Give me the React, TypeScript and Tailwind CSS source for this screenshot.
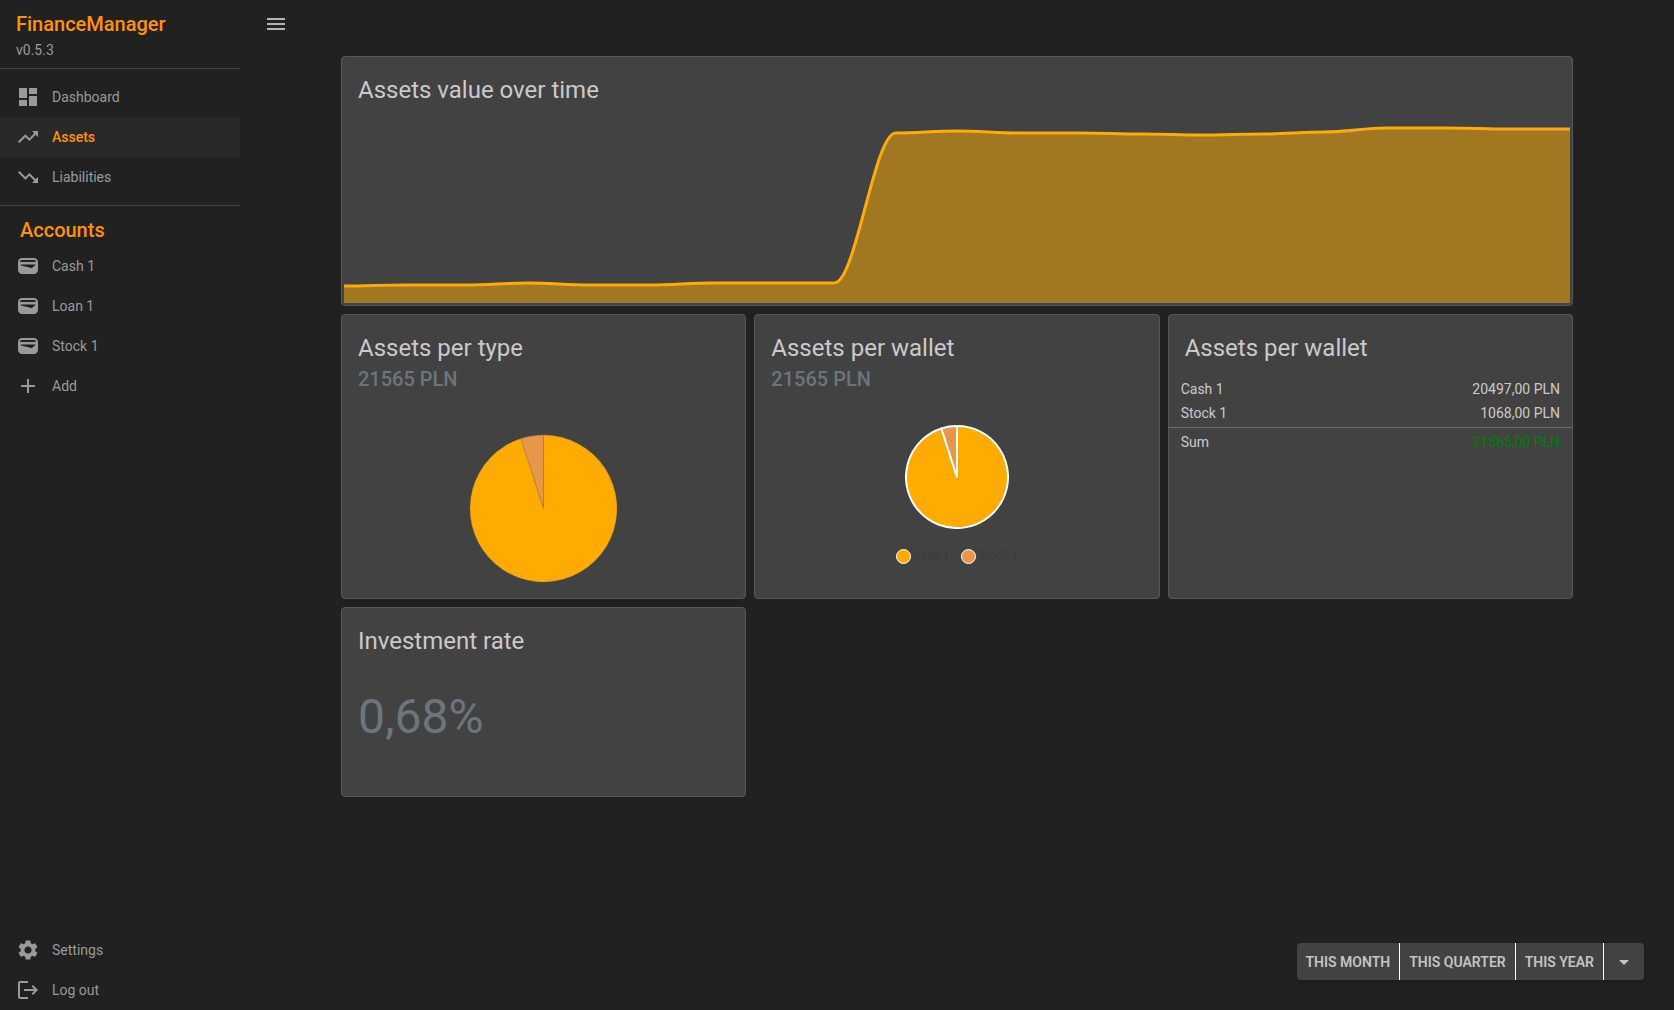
import React, { useState } from "react";
import {
  MdAdd,
  MdArrowDropDown,
  MdDashboard,
  MdLogout,
  MdMenu,
  MdSettings,
  MdTrendingDown,
  MdTrendingUp,
} from "react-icons/md";

function WalletIcon({ className }: { className?: string }) {
  return (
    <svg viewBox="0 0 24 24" fill="currentColor" fillRule="evenodd" className={className} aria-hidden="true">
      <path d="M18 4H6C3.79 4 2 5.79 2 8v8c0 2.21 1.79 4 4 4h12c2.21 0 4-1.79 4-4V8c0-2.21-1.79-4-4-4zM16.14 13.77c-.24.2-.57.28-.88.2L4.15 11.25C4.45 10.52 5.16 10.4 6 10.4h12c.67 0 1.26.1 1.63.44L16.14 13.77zM6 6h12c1.1 0 2 .9 2 2H4C4 6.9 4.9 6 6 6z" />
    </svg>
  );
}

type IconType = React.ComponentType<{ className?: string }>;

function NavItem({ icon: Icon, label, active = false }: { icon: IconType; label: string; active?: boolean }) {
  return (
    <a
      href="#"
      aria-current={active ? "page" : undefined}
      className={
        active
          ? "flex h-10 items-center gap-3 bg-[#292929] px-4 text-sm font-medium text-[#ff9300]"
          : "flex h-10 items-center gap-3 px-4 text-sm text-[#9a9a9a] hover:bg-[#292929]"
      }
    >
      <Icon className="size-6 shrink-0 text-[#9a9a9a]" />
      {label}
    </a>
  );
}

const values = [
  164, 163, 163, 161, 163, 163, 161, 161, 161, 11, 9, 11, 11, 12, 13, 12, 10, 6, 6, 7, 7,
];
const chartWidth = 1220;
const chartHeight = 181;

function smoothLine(points: number[]) {
  const step = chartWidth / (points.length - 1);
  const bend = step * 0.35;
  return points
    .map((y, i) => {
      const x = i * step;
      if (i === 0) return `M0 ${y}`;
      return `C${x - step + bend} ${points[i - 1]} ${x - bend} ${y} ${x} ${y}`;
    })
    .join(" ");
}

function AreaChart() {
  const line = smoothLine(values);
  return (
    <svg
      viewBox={`0 0 ${chartWidth} ${chartHeight}`}
      preserveAspectRatio="none"
      className="h-[181px] w-full"
      role="img"
      aria-label="Assets value over time"
    >
      <path d={`${line} V${chartHeight} H0 Z`} fill="#ffab00" fillOpacity="0.5" />
      <path d={line} fill="none" stroke="#feab0c" strokeWidth="3" vectorEffect="non-scaling-stroke" />
      <path d={`M0 ${chartHeight - 1}H${chartWidth}`} stroke="#8f7a45" strokeWidth="1" vectorEffect="non-scaling-stroke" />
    </svg>
  );
}

function PieChart({ radius, stroke, strokeWidth, className }: { radius: number; stroke: string; strokeWidth: number; className: string }) {
  const angle = (1068 / 21565) * Math.PI * 2;
  const half = radius + 1;
  const x = -Math.sin(angle) * radius;
  const y = -Math.cos(angle) * radius;
  return (
    <svg viewBox={`${-half} ${-half} ${half * 2} ${half * 2}`} className={className} role="img" aria-label="Share of assets">
      <g stroke={stroke} strokeWidth={strokeWidth} strokeLinejoin="round">
        <path d={`M0 0V${-radius}A${radius} ${radius} 0 1 1 ${x} ${y}Z`} fill="#ffab00" />
        <path d={`M0 0L${x} ${y}A${radius} ${radius} 0 0 1 0 ${-radius}Z`} fill="#e69749" />
      </g>
    </svg>
  );
}

function Card({ title, className, children }: { title: string; className: string; children: React.ReactNode }) {
  return (
    <section className={`flex flex-col rounded border border-[#585858] bg-[#424242] ${className}`}>
      <h2 className="px-4 pt-[17px] text-2xl text-[#cacaca]">{title}</h2>
      {children}
    </section>
  );
}

function Legend({ color, label }: { color: string; label: string }) {
  return (
    <li className="flex items-center gap-0.5">
      <span className="size-[15px] rounded-full border border-white" style={{ backgroundColor: color }} />
      {label}
    </li>
  );
}

export default function App() {
  const [open, setOpen] = useState(true);
  return (
    <div className="flex min-h-screen bg-[#212121] font-['Roboto',sans-serif]">
      {open && (
        <aside className="flex w-60 shrink-0 flex-col">
          <header className="border-b border-[#424242] px-4 pt-2 pb-2">
            <h1 className="text-xl leading-8 font-medium text-[#ff9300]">FinanceManager</h1>
            <p className="text-sm text-[#9a9a9a]">v0.5.3</p>
          </header>
          <nav aria-label="Main" className="border-b border-[#424242] py-2">
            <NavItem icon={MdDashboard} label="Dashboard" />
            <NavItem icon={MdTrendingUp} label="Assets" active />
            <NavItem icon={MdTrendingDown} label="Liabilities" />
          </nav>
          <nav aria-label="Accounts" className="pt-2">
            <h2 className="px-5 text-xl leading-8 font-medium text-[#ff9300]">Accounts</h2>
            <NavItem icon={WalletIcon} label="Cash 1" />
            <NavItem icon={WalletIcon} label="Loan 1" />
            <NavItem icon={WalletIcon} label="Stock 1" />
            <NavItem icon={MdAdd} label="Add" />
          </nav>
          <nav aria-label="Session" className="mt-auto">
            <NavItem icon={MdSettings} label="Settings" />
            <NavItem icon={MdLogout} label="Log out" />
          </nav>
        </aside>
      )}

      <div className="flex min-w-0 flex-1 flex-col">
        <header className="flex h-12 items-center px-6">
          <button type="button" aria-label="Toggle menu" onClick={() => setOpen(!open)}>
            <MdMenu className="size-6 text-[#b2b2b2]" />
          </button>
        </header>

        <main className="mx-auto grid w-full max-w-[1280px] grid-cols-3 gap-2 px-6 pt-2">
          <Card title="Assets value over time" className="col-span-3 min-h-[250px]">
            <div className="mt-auto px-0.5 pb-0.5">
              <AreaChart />
            </div>
          </Card>

          <Card title="Assets per type" className="min-h-[285px]">
            <p className="px-4 text-xl leading-[30px] font-medium text-[#6c757d]">21565 PLN</p>
            <PieChart radius={73} stroke="#8c7355" strokeWidth={0.3} className="mx-auto mt-auto mb-[15px] h-[149px]" />
          </Card>

          <Card title="Assets per wallet" className="min-h-[285px]">
            <p className="px-4 text-xl leading-[30px] font-medium text-[#6c757d]">21565 PLN</p>
            <PieChart radius={51} stroke="#ffffff" strokeWidth={2} className="mx-auto mt-[31px] h-[104px]" />
            <ul className="mt-[19px] flex justify-center gap-3 text-xs text-[#373d3f]">
              <Legend color="#ffab00" label="Cash 1" />
              <Legend color="#e69749" label="Stock 1" />
            </ul>
          </Card>

          <Card title="Assets per wallet" className="min-h-[285px]">
            <table className="mt-[13px] w-full text-sm leading-6 text-[#cacaca]">
              <tbody>
                <tr>
                  <th scope="row" className="pl-3 text-left font-normal">Cash 1</th>
                  <td className="pr-3 text-right">20497,00 PLN</td>
                </tr>
                <tr>
                  <th scope="row" className="pb-0.5 pl-3 text-left font-normal">Stock 1</th>
                  <td className="pr-3 pb-0.5 text-right">1068,00 PLN</td>
                </tr>
              </tbody>
              <tfoot className="border-t border-[#6e6e6e]">
                <tr>
                  <th scope="row" className="pt-0.5 pl-3 text-left font-normal">Sum</th>
                  <td className="pt-0.5 pr-3 text-right text-[#008000]">21565,00 PLN</td>
                </tr>
              </tfoot>
            </table>
          </Card>

          <Card title="Investment rate" className="min-h-[190px]">
            <p className="mt-8 px-4 text-5xl leading-14 text-[#6c757d]">0,68%</p>
          </Card>
        </main>

        <footer className="mt-auto flex justify-end p-[30px]">
          <div
            role="group"
            aria-label="Date range"
            className="flex h-[37px] divide-x divide-white overflow-hidden rounded bg-[#424242] text-sm font-semibold text-[#c4c4c4] shadow-md"
          >
            <button type="button" className="px-[9px]">THIS MONTH</button>
            <button type="button" className="px-[9px]">THIS QUARTER</button>
            <button type="button" className="px-[9px]">THIS YEAR</button>
            <button type="button" aria-label="More ranges" className="px-2">
              <MdArrowDropDown className="size-6" />
            </button>
          </div>
        </footer>
      </div>
    </div>
  );
}
